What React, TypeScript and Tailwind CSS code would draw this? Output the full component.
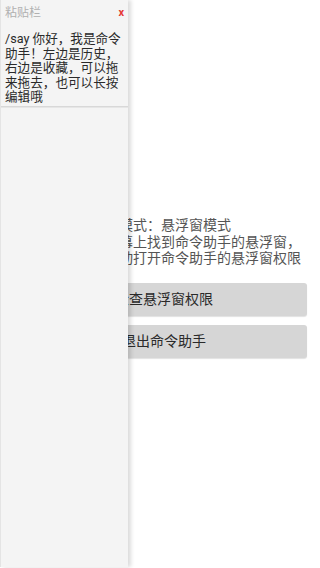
import React from "react";

const font = { fontFamily: 'Roboto, "Noto Sans CJK SC", sans-serif' };

function PastePanel() {
  return (
    <div className="absolute left-0 top-0 flex h-[567px] w-[128px] flex-col border-l border-[#e4e4e4] bg-[#f4f4f4] shadow-[3px_0_4px_rgba(0,0,0,0.14)]">
      {/* header */}
      <div className="flex h-[25px] items-center justify-between pl-[4px] pr-[4px]">
        <span className="text-[12px] leading-none text-[#b0b0b0]">粘贴栏</span>
        <span className="text-[11px] font-bold leading-none text-[#e53935]">x</span>
      </div>
      {/* current clip */}
      <div className="pl-[4px] pr-[3px] pt-[7px] text-[12.6px] leading-[14.5px] text-[#2a2a2a]">
        /say 你好，我是命令助手！左边是历史，右边是收藏，可以拖来拖去，也可以长按编辑哦
      </div>
      <div className="mt-[1px] h-[2px] border-t border-[#d8d8d8] bg-[#e6e6e6]" />
      <div className="flex-1" />
    </div>
  );
}

export default function App() {
  return (
    <div className="relative h-[568px] w-[320px] overflow-hidden bg-white" style={font}>
      <div className="pl-[21px] pr-[13px] pt-[217px]">
        <div className="text-[14px] leading-[16.5px] text-[#555]">
          <p>当前命令助手的模式：悬浮窗模式</p>
          <p>如果您无法在屏幕上找到命令助手的悬浮窗，</p>
          <p>请前往设置中手动打开命令助手的悬浮窗权限</p>
        </div>
        <div className="mt-[16px] flex flex-col gap-[9px]">
          <button className="flex h-[33px] items-center justify-center rounded-[3px] bg-[#d6d6d6] text-[14px] text-[#2a2a2a] shadow-[0_1px_1px_rgba(0,0,0,0.12)]">
            检查悬浮窗权限
          </button>
          <button className="flex h-[33px] items-center justify-center rounded-[3px] bg-[#d6d6d6] text-[14px] text-[#2a2a2a] shadow-[0_1px_1px_rgba(0,0,0,0.12)]">
            退出命令助手
          </button>
        </div>
      </div>
      <PastePanel />
    </div>
  );
}
